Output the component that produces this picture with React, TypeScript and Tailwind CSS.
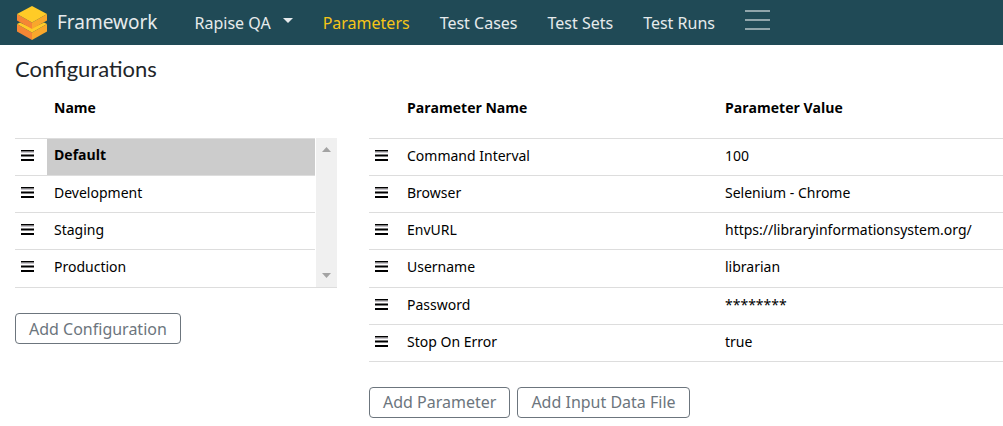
import React from "react";

const configurations = ["Default", "Development", "Staging", "Production"];

const parameters = [
  ["Command Interval", "100"],
  ["Browser", "Selenium - Chrome"],
  ["EnvURL", "https://libraryinformationsystem.org/"],
  ["Username", "librarian"],
  ["Password", "********"],
  ["Stop On Error", "true"],
];

const links = ["Parameters", "Test Cases", "Test Sets", "Test Runs"];

function Logo() {
  return (
    <svg width="30" height="34" viewBox="0 0 30 34" aria-hidden="true">
      <path d="M0 18 L15 26.500 L15 34 L0 25.500 Z" fill="#f58634" />
      <path d="M30 18 L15 26.500 L15 34 L30 25.500 Z" fill="#f9a72b" />
      <path d="M0 18 L3 16.500 L15 22 L27 16.500 L30 18 L15 26.500 Z" fill="#ffcb27" />
      <path d="M0 8 L15 16.500 L15 23 L0 14.500 Z" fill="#f58634" />
      <path d="M30 8 L15 16.500 L15 23 L30 14.500 Z" fill="#f9a72b" />
      <path d="M15 0 L30 8 L15 16.500 L0 8 Z" fill="#ffcb27" />
    </svg>
  );
}

function Grip() {
  return (
    <svg className="mb-[3px] block" width="13" height="11" viewBox="0 0 13 11" aria-hidden="true">
      <path d="M0 2h13v1H0z" fill="#c8c4cc" />
      <path d="M0 0h13v1.500H0zM0 4.500h13v2H0zM0 9h13v2H0z" fill="#000" />
    </svg>
  );
}

function OutlineButton({ children }: { children: string }) {
  return (
    <button
      type="button"
      className="h-[31px] rounded border border-[#6c757d] px-[13px] font-['Noto_Sans',sans-serif] text-base leading-none text-[#6c757d]"
    >
      {children}
    </button>
  );
}

export default function App() {
  return (
    <div className="overflow-x-hidden bg-white font-['Noto_Sans',sans-serif] text-sm text-black">
      <header className="flex h-[45px] items-center bg-[#204a56] pl-[17px] text-base text-[#e6eaec]">
        <a href="#" className="flex items-center gap-[10px] text-[19px]">
          <Logo />
          Framework
        </a>
        <nav className="ml-[37px] flex items-center gap-[30px]">
          <button type="button" className="flex items-center gap-3">
            Rapise QA
            <svg className="mb-1" width="10" height="5" viewBox="0 0 10 5" aria-hidden="true">
              <path d="M0 0h10L5 5z" fill="currentColor" />
            </svg>
          </button>
          {links.map((link, i) => (
            <a key={link} href="#" className={i === 0 ? "text-[#f5c518]" : ""}>
              {link}
            </a>
          ))}
          <button type="button" aria-label="Menu">
            <svg className="mb-[5px] block" width="25" height="20" viewBox="0 0 25 20" aria-hidden="true">
              <path d="M0 1h25M0 10h25M0 19h25" stroke="#90a5ab" strokeWidth="2" />
            </svg>
          </button>
        </nav>
      </header>

      <main className="pl-[15px]">
        <h1 className="pt-[10px] pb-[2px] font-[Lato,sans-serif] text-[22px] leading-7 text-[#212529]">Configurations</h1>
        <div className="grid grid-cols-[354fr_634fr]">
          <section className="pr-8">
            <div className="flex gap-px border-b border-[#dddddd]">
              <table className="w-full table-fixed border-collapse text-left">
                <thead>
                  <tr className="h-[53px]">
                    <th className="w-8" />
                    <th className="px-[7px] pt-[13px] align-top font-['Open_Sans',sans-serif] font-bold">Name</th>
                  </tr>
                </thead>
                <tbody>
                  {configurations.map((name, i) => (
                    <tr key={name} className="h-[37px] border-t border-[#dddddd] nth-4:h-[38px]">
                      <td className="pl-[6px]"><Grip /></td>
                      <td className={i === 0 ? "bg-[#cccccc] px-[7px] pb-[3px] font-['Open_Sans',sans-serif] font-bold" : "px-[7px] pb-[2px]"}>
                        {name}
                      </td>
                    </tr>
                  ))}
                </tbody>
              </table>
              <div className="mt-[53px] flex w-[21px] shrink-0 flex-col items-center justify-between bg-[#f0f0f0] py-[9px]">
                <svg width="9" height="5" viewBox="0 0 9 5" aria-hidden="true">
                  <path d="M0 5h9L4.500 0z" fill="#a3a3a3" />
                </svg>
                <svg width="9" height="5" viewBox="0 0 9 5" aria-hidden="true">
                  <path d="M0 0h9L4.500 5z" fill="#a3a3a3" />
                </svg>
              </div>
            </div>
            <div className="mt-[25px]">
              <OutlineButton>Add Configuration</OutlineButton>
            </div>
          </section>

          <section>
            <table className="w-full table-fixed border-collapse border-b border-[#dddddd] text-left">
              <thead>
                <tr className="h-[53px]">
                  <th className="w-[31px]" />
                  <th className="w-[318px] px-[7px] pt-[13px] align-top font-['Open_Sans',sans-serif] font-bold">Parameter Name</th>
                  <th className="px-[7px] pt-[13px] align-top font-['Open_Sans',sans-serif] font-bold">Parameter Value</th>
                </tr>
              </thead>
              <tbody>
                {parameters.map(([name, value]) => (
                  <tr key={name} className="h-[37px] border-t border-[#dddddd] nth-4:h-[38px]">
                    <td className="pl-[6px]"><Grip /></td>
                    <td className="px-[7px] pb-[2px]">{name}</td>
                    <td className="px-[7px] pb-[2px]">{value}</td>
                  </tr>
                ))}
              </tbody>
            </table>
            <div className="mt-[25px] flex gap-[7px]">
              <OutlineButton>Add Parameter</OutlineButton>
              <OutlineButton>Add Input Data File</OutlineButton>
            </div>
          </section>
        </div>
      </main>
    </div>
  );
}
